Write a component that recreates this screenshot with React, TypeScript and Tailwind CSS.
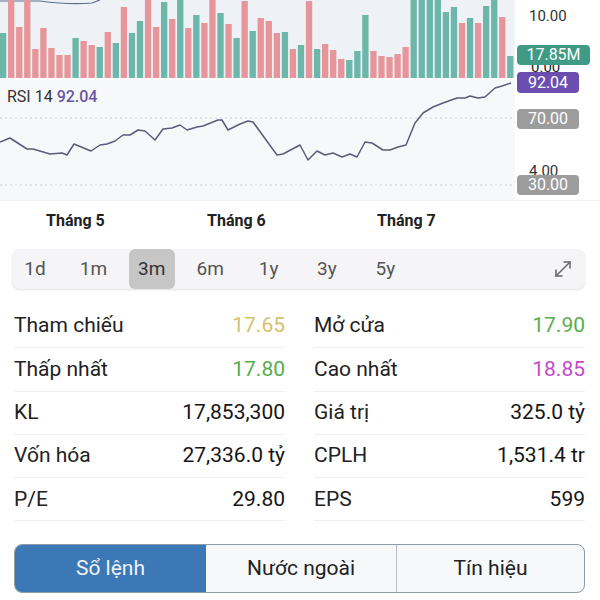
import { MoveDiagonal } from "lucide-react"

// volume bars: [color, top]  t = teal (up), r = red (down)
const BARS: [string, number][] = [
  ["t", 33], ["r", 0], ["r", 27], ["r", 0], ["r", 49], ["r", 28], ["r", 48], ["r", 55],
  ["r", 55], ["t", 38], ["r", 41], ["r", 45], ["t", 47], ["r", 32], ["t", 43], ["r", 7],
  ["t", 33], ["t", 21], ["r", 0], ["r", 27], ["t", 2], ["r", 19], ["t", 0], ["r", 28],
  ["t", 15], ["r", 23], ["r", 0], ["t", 13], ["r", 24], ["t", 38], ["r", 1], ["t", 31],
  ["r", 18], ["r", 21], ["r", 33], ["t", 32], ["r", 49], ["t", 45], ["r", 1], ["t", 49],
  ["r", 44], ["r", 50], ["r", 59], ["t", 60], ["t", 51], ["t", 15], ["r", 51], ["r", 56],
  ["r", 57], ["r", 54], ["r", 47], ["t", 0], ["t", 0], ["t", 0], ["t", 0], ["t", 12],
  ["t", 7], ["r", 23], ["t", 18], ["r", 23], ["t", 6], ["t", 0], ["r", 17], ["t", 56],
]

// rsi line, page coords
const RSI: [number, number][] = [
  [0, 142], [10, 138], [27, 149], [33, 149], [50, 154], [62, 153], [67, 155], [74, 144],
  [91, 151], [100, 145], [107, 144], [115, 141], [123, 135], [130, 135], [138, 130],
  [145, 131], [155, 140], [163, 129], [172, 128], [180, 125], [187, 130], [197, 127],
  [203, 126], [218, 120], [222, 120], [228, 130], [240, 124], [248, 121], [253, 122],
  [277, 155], [283, 154], [300, 145], [308, 160], [317, 151], [325, 155], [333, 153],
  [342, 157], [350, 154], [357, 157], [365, 142], [372, 143], [383, 150], [390, 150],
  [398, 147], [406, 145], [415, 123], [423, 113], [433, 107], [443, 103], [457, 98],
  [465, 98], [470, 96], [478, 98], [485, 97], [495, 88], [502, 86], [511, 83],
]

const PERIODS = ["1d", "1m", "3m", "6m", "1y", "3y", "5y"]

type Stat = { label: string; value: string; color?: string }

const LEFT: Stat[] = [
  { label: "Tham chiếu", value: "17.65", color: "text-[#d6c26c]" },
  { label: "Thấp nhất", value: "17.80", color: "text-[#55ad4e]" },
  { label: "KL", value: "17,853,300" },
  { label: "Vốn hóa", value: "27,336.0 tỷ" },
  { label: "P/E", value: "29.80" },
]

const RIGHT: Stat[] = [
  { label: "Mở cửa", value: "17.90", color: "text-[#5aad4f]" },
  { label: "Cao nhất", value: "18.85", color: "text-[#c349c9]" },
  { label: "Giá trị", value: "325.0 tỷ" },
  { label: "CPLH", value: "1,531.4 tr" },
  { label: "EPS", value: "599" },
]

function StatColumn({ rows }: { rows: Stat[] }) {
  return (
    <div className="flex flex-col w-[271px]">
      {rows.map((r) => (
        <div key={r.label} className="flex h-[43.3px] items-center justify-between border-b border-[#efefef]">
          <span className="text-[21px] text-[#222]">{r.label}</span>
          <span className={`text-[21px] ${r.color ?? "text-[#151515]"}`}>{r.value}</span>
        </div>
      ))}
    </div>
  )
}

export default function App() {
  const rsiPath = RSI.map(([x, y], i) => `${i ? "L" : "M"}${x} ${y - 80}`).join(" ")

  return (
    <div className="w-[600px] h-[600px] overflow-hidden bg-white font-['Roboto',sans-serif]">
      {/* CHART: volume + rsi with right axis */}
      <div className="flex h-[200px]">
        <div className="flex flex-col w-[515px]">
          <svg width="515" height="78" className="block bg-[#eef2f6]">
            <path d="M0 1 L40 1 Q70 5 92 3 L100 0" fill="none" stroke="#5b6f88" strokeWidth="1.2" />
            {BARS.map(([c, top], i) => (
              <rect key={i} x={i * 8.05} y={top} width={6.3} height={78 - top} fill={c === "t" ? "#6cb6aa" : "#e6959a"} />
            ))}
          </svg>
          <div className="relative flex-1 mt-[2px] bg-[#f7f8fa]">
            <div className="absolute left-[7px] top-[5px] text-[16px] text-[#333]">
              RSI 14 <span className="text-[#6656a6] font-medium">92.04</span>
            </div>
            <svg width="515" height="120" className="block">
              <line x1="0" y1="38" x2="515" y2="38" stroke="#cfcfcf" strokeDasharray="2 3" />
              <line x1="0" y1="105" x2="515" y2="105" stroke="#cfcfcf" strokeDasharray="2 3" />
              <path d={rsiPath} fill="none" stroke="#5e5a7c" strokeWidth="1.5" strokeLinejoin="round" />
            </svg>
          </div>
        </div>

        {/* right axis */}
        <div className="relative flex-1 text-[15px] text-[#333]">
          <span className="absolute left-[14px] top-[5px]">10.00</span>
          <span className="absolute left-[16px] top-[56px] text-[#222]">0.00</span>
          <span className="absolute left-[14px] top-[160px]">4.00</span>
          <div className="absolute left-[2px] top-[45px] h-[20px] w-[73px] rounded-sm bg-[#3f9a86] text-white text-[16px] leading-[20px] text-center">17.85M</div>
          <div className="absolute left-[2px] top-[72px] h-[21px] w-[62px] rounded-sm bg-[#6a4fb0] text-white text-[16px] leading-[21px] text-center">92.04</div>
          <div className="absolute left-[2px] top-[109px] h-[20px] w-[62px] rounded-sm bg-[#9c9c9c] text-white text-[16px] leading-[20px] text-center">70.00</div>
          <div className="absolute left-[2px] top-[175px] h-[20px] w-[62px] rounded-sm bg-[#9c9c9c] text-white text-[16px] leading-[20px] text-center">30.00</div>
        </div>
      </div>

      {/* month labels */}
      <div className="relative h-[40px] border-t border-[#f0f0f0] text-[16px] font-bold text-[#222]">
        <span className="absolute left-[46px] top-[8px]">Tháng 5</span>
        <span className="absolute left-[207px] top-[8px]">Tháng 6</span>
        <span className="absolute left-[377px] top-[8px]">Tháng 7</span>
      </div>

      {/* period selector */}
      <div className="mx-[12px] mt-[9px] flex h-[40px] w-[573px] items-center rounded-lg bg-[#f5f5f7] shadow-[0_1px_2px_rgba(0,0,0,0.12)]">
        <div className="flex gap-[12.4px]">
          {PERIODS.map((p) => (
            <div
              key={p}
              className={`flex h-[40px] w-[46px] items-center justify-center rounded-md text-[19px] ${
                p === "3m" ? "bg-[#c6c6c6] text-[#333]" : "text-[#555]"
              }`}
            >
              {p}
            </div>
          ))}
        </div>
        <MoveDiagonal className="ml-auto mr-[10px] text-[#666]" size={24} strokeWidth={1.5} />
      </div>

      {/* stats */}
      <div className="mt-[16px] flex justify-between px-[14px] pr-[15px]">
        <StatColumn rows={LEFT} />
        <StatColumn rows={RIGHT} />
      </div>

      {/* bottom tabs */}
      <div className="mx-[14px] mt-[23px] flex h-[49px] w-[571px] overflow-hidden rounded-lg border border-[#8e9aa6] bg-[#f6f8fa] text-[21px]">
        <div className="flex w-[191px] items-center justify-center bg-[#3b78b5] text-[#eef4fa]">Sổ lệnh</div>
        <div className="flex w-[190px] items-center justify-center text-[#222]">Nước ngoài</div>
        <div className="flex flex-1 items-center justify-center border-l border-[#b8bfc6] text-[#222]">Tín hiệu</div>
      </div>
    </div>
  )
}
